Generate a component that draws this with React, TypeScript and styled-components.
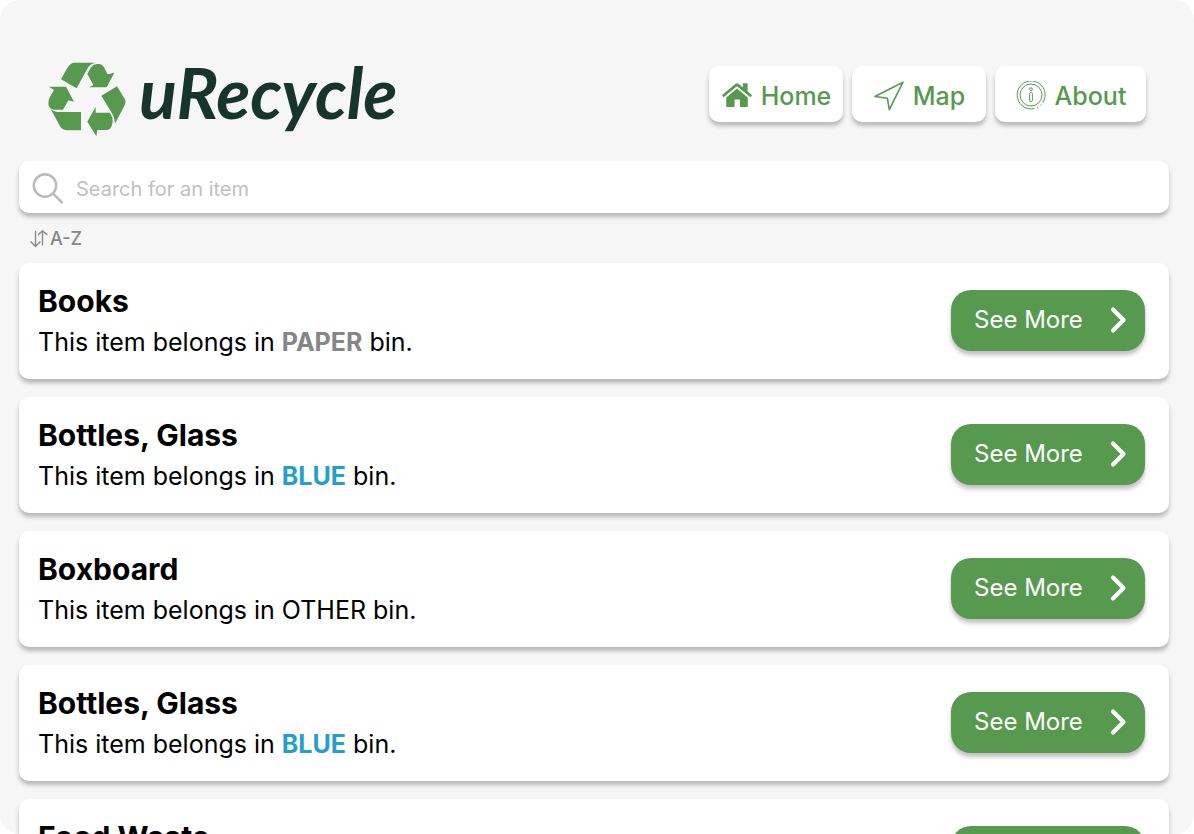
import React from "react";
import styled, { createGlobalStyle } from "styled-components";

const green = "#57994f";

const GlobalStyle = createGlobalStyle`
  * { box-sizing: border-box; }
  body {
    margin: 0;
    background: #fff;
    color: #000;
    font-family: Inter, "Liberation Sans", sans-serif;
  }
`;

const Page = styled.main`
  height: 100vh;
  padding: 0 25px 0 19px;
  background: #f6f6f6;
  border-radius: 20px;
  overflow-y: auto;
  scrollbar-width: none;
`;

const Header = styled.header`
  display: flex;
  align-items: flex-start;
  justify-content: space-between;
  height: 161px;
  padding: 50px 23px 0 29px;
`;

const Brand = styled.a`
  display: flex;
  align-items: flex-start;
  gap: 13px;
  color: #17352c;
  text-decoration: none;
`;

const BrandIcon = styled.svg`
  width: 78px;
  height: 75px;
  margin-top: 12px;
  fill: ${green};
`;

const BrandName = styled.span`
  font: italic 700 70px/84px Lato, sans-serif;
`;

const Nav = styled.nav`
  display: flex;
  gap: 9px;
  padding-top: 16px;
`;

const NavLink = styled.a<{ $wide?: boolean }>`
  display: flex;
  align-items: center;
  justify-content: center;
  gap: 9px;
  width: ${(p) => (p.$wide ? 151 : 134)}px;
  height: 56px;
  padding: 4px 0 0 1px;
  border-radius: 10px;
  background: #fff;
  box-shadow: 0 4px 4px rgba(0, 0, 0, 0.25);
  color: ${green};
  font-size: 25px;
  font-weight: 500;
  line-height: 30px;
  text-decoration: none;
`;

const NavIcon = styled.svg`
  flex: none;
  width: 30px;
  height: 30px;
`;

const SearchBar = styled.label`
  display: flex;
  align-items: center;
  gap: 12px;
  height: 52px;
  padding: 3px 13px 0;
  border-radius: 10px;
  background: #fff;
  box-shadow: 0 4px 4px rgba(0, 0, 0, 0.25);
`;

const SearchIcon = styled.svg`
  flex: none;
  width: 32px;
  height: 32px;
  fill: none;
  stroke: #b9b9b9;
`;

const SearchInput = styled.input`
  flex: 1;
  min-width: 0;
  padding: 0;
  border: 0;
  outline: 0;
  background: transparent;
  color: #000;
  font: 400 20px/24px Inter, sans-serif;
  &::placeholder {
    color: #c0c0c0;
    opacity: 1;
  }
`;

const SortButton = styled.button`
  display: flex;
  align-items: center;
  gap: 2px;
  height: 50px;
  padding: 2px 11px 0;
  border: 0;
  background: none;
  color: #868686;
  font: 500 18px/22px Inter, sans-serif;
`;

const SortIcon = styled.svg`
  width: 18px;
  height: 18px;
  fill: none;
  stroke: currentColor;
`;

const List = styled.ul`
  display: flex;
  flex-direction: column;
  gap: 18px;
  margin: 0;
  padding: 0 0 18px;
  list-style: none;
`;

const Card = styled.li`
  display: flex;
  align-items: center;
  justify-content: space-between;
  height: 116px;
  padding: 0 24px 2px 19px;
  border-radius: 10px;
  background: #fff;
  box-shadow: 0 4px 4px rgba(0, 0, 0, 0.25);
`;

const ItemName = styled.h2`
  margin: 0 0 8px;
  font-size: 30px;
  font-weight: 700;
  line-height: 36px;
`;

const ItemText = styled.p`
  margin: 0;
  font-size: 25px;
  line-height: 30px;
`;

const Bin = styled.span<{ $color?: string }>`
  color: ${(p) => p.$color ?? "inherit"};
  font-weight: ${(p) => (p.$color ? 700 : 400)};
`;

const MoreButton = styled.button`
  display: flex;
  align-items: center;
  justify-content: space-between;
  width: 194px;
  height: 61px;
  padding: 0 18px 0 23px;
  border: 0;
  border-radius: 20px;
  background: ${green};
  box-shadow: 0 4px 4px rgba(0, 0, 0, 0.25);
  color: #fff;
  font: 400 24px/30px Inter, sans-serif;
`;

const Chevron = styled.svg`
  width: 17px;
  height: 28px;
  fill: none;
  stroke: currentColor;
`;

const items = [
  { name: "Books", bin: "PAPER", color: "#868686" },
  { name: "Bottles, Glass", bin: "BLUE", color: "#249fcd" },
  { name: "Boxboard", bin: "OTHER" },
  { name: "Bottles, Glass", bin: "BLUE", color: "#249fcd" },
  { name: "Food Waste", bin: "GREEN", color: green },
];

export default function App() {
  return (
    <>
      <GlobalStyle />
      <Page>
        <Header>
          <Brand href="#">
            <BrandIcon viewBox="23 37 234 225" aria-hidden="true">
              <path d="M62 89 82 53Q90 39 104 39H164Q148 43 140 59L109 116Z" />
              <path d="M141 73 152 53Q160 43 170 43H178Q186 44 191 53L202 74 222 69 199 113H147L159 106Z" />
              <path d="M230 110 252 146Q259 157 252 168L224 222Q224 205 215 191L183 138Z" />
              <path d="M166 171V189H208Q220 204 216 222 212 239 200 241H171L168 260 141 216Z" />
              <path d="M26 111H77L101 156 84 152 68 180H40Q26 178 24 163 23 151 29 141L41 121Z" />
              <path d="M30 176Q37 186 52 187H122V242H82Q66 242 59 230Z" />
            </BrandIcon>
            <BrandName>uRecycle</BrandName>
          </Brand>
          <Nav>
            <NavLink href="#">
              <NavIcon viewBox="0 0 30 30" fill="currentColor" aria-hidden="true">
                <path d="M15 7.4 25.8 16.5V25.2Q25.8 26 25 26H18V18.6H12.6V26H5Q4.2 26 4.2 25.2V16.5Z" />
                <path d="M0.3 13.9 13 3.2Q15 1.7 17 3.2L20.8 6.4V2.3H25.6V10.6L29.7 13.9 28.3 15.9 15 4.9 1.7 15.9Z" />
                <path
                  d="M1.4 14.6 15 3.6 28.6 14.6"
                  fill="none"
                  stroke="currentColor"
                  strokeWidth="2"
                  strokeLinecap="round"
                />
                <path d="M2.6 16.4 15 6.1 27.4 16.4" fill="none" stroke="#fff" strokeWidth="1" />
              </NavIcon>
              Home
            </NavLink>
            <NavLink href="#">
              <NavIcon
                viewBox="0 0 30 30"
                fill="none"
                stroke="currentColor"
                strokeWidth="1.6"
                strokeLinejoin="round"
                aria-hidden="true"
              >
                <path d="M29 1.2 0.9 15.5 13.4 17.2 15.3 28.7Z" />
              </NavIcon>
              Map
            </NavLink>
            <NavLink href="#" $wide>
              <NavIcon viewBox="0 1 30 30" fill="none" stroke="currentColor" strokeWidth="1" aria-hidden="true">
                <path d="M18.5 28.5A14 14 0 1 1 26.7 22.8M21 27.7 22 27.2M24.4 25.4 25.5 24.4" />
                <circle cx="15" cy="15" r="11" />
                <circle cx="15" cy="9.2" r="1.4" />
                <rect x="13.6" y="12.5" width="2.8" height="9" rx="1.2" />
              </NavIcon>
              About
            </NavLink>
          </Nav>
        </Header>
        <SearchBar>
          <SearchIcon viewBox="0 0 32 32" strokeWidth="2.4" aria-hidden="true">
            <circle cx="13" cy="12.5" r="11.2" />
            <path d="M20.8 20.3 30.6 30.1" />
          </SearchIcon>
          <SearchInput type="text" placeholder="Search for an item" aria-label="Search for an item" />
        </SearchBar>
        <SortButton type="button">
          <SortIcon viewBox="0 0 18 18" strokeWidth="1.3" aria-hidden="true">
            <path d="M5.5 1V16.5M0.6 11.5 5.5 16.5 10.4 11.5M12.5 15.5V0.8M8 5 12.5 0.8 17.3 5" />
          </SortIcon>
          A-Z
        </SortButton>
        <List>
          {items.map((item, i) => (
            <Card key={i}>
              <div>
                <ItemName>{item.name}</ItemName>
                <ItemText>
                  This item belongs in <Bin $color={item.color}>{item.bin}</Bin> bin.
                </ItemText>
              </div>
              <MoreButton type="button">
                See More
                <Chevron viewBox="0 0 17 28" strokeWidth="4.2" strokeLinecap="round" strokeLinejoin="round" aria-hidden="true">
                  <path d="M3 3.5 13.5 14 3 24.5" />
                </Chevron>
              </MoreButton>
            </Card>
          ))}
        </List>
      </Page>
    </>
  );
}
